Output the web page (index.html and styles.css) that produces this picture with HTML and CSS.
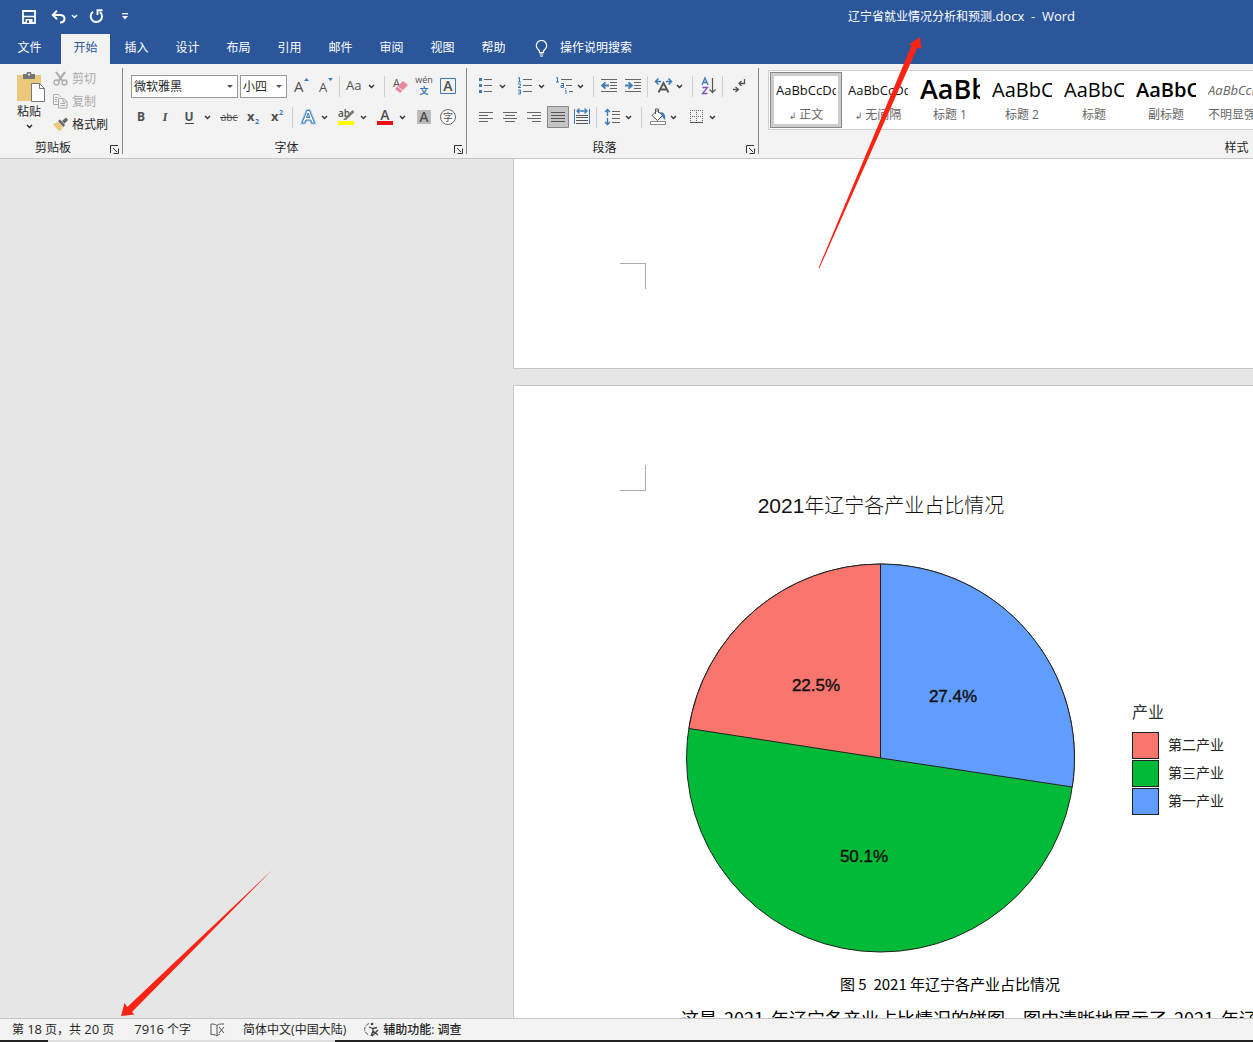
FILE: index.html
```html
<!DOCTYPE html>
<html lang="zh-CN">
<head>
<meta charset="utf-8">
<title>辽宁省就业情况分析和预测.docx - Word</title>
<link rel="stylesheet" href="styles.css">
</head>
<body>
<svg class="defs" aria-hidden="true">
  <symbol id="chev" viewBox="0 0 7 5"><path d="M1 1l2.500 2.500L6 1" fill="none" stroke="currentColor" stroke-width="1.400"/></symbol>
  <symbol id="launch" viewBox="0 0 9 9"><path d="M.5 8V.5H8M3 3l4 4M8.500 3.500v5h-5" fill="none" stroke="#333"/></symbol>
</svg>
<div class="app">
  <header class="titlebar">
    <div class="quick">
      <button aria-label="保存" class="q-save"><svg width="14" height="14" viewBox="0 0 14 14"><path d="M1 1h12v12H1z" fill="none" stroke="#fff" stroke-width="1.800"/><path d="M1 6.500h12" stroke="#fff" stroke-width="1.500"/><path d="M3.500 9h7v4h-7z" fill="#fff"/><path d="M5 10.500h2V13H5z" fill="#2b579a"/></svg></button>
      <button aria-label="撤消" class="q-undo"><svg width="15" height="14" viewBox="0 0 15 14"><path d="M2 5h7c6 0 6 7.500 0 7.500M6 .8L1.800 5 6 9.200" fill="none" stroke="#fff" stroke-width="2"/></svg></button>
      <button aria-label="撤消列表" class="q-chev"><svg width="7" height="5"><use href="#chev"/></svg></button>
      <button aria-label="重复" class="q-redo"><svg width="15" height="15" viewBox="0 0 15 15"><path d="M4 2.700a5.700 5.700 0 1 0 7 .2" fill="none" stroke="#fff" stroke-width="1.900"/><path d="M8.500 6V1.300h5" fill="none" stroke="#fff" stroke-width="1.900"/></svg></button>
      <button aria-label="自定义快速访问工具栏" class="q-more"><svg width="6" height="7" viewBox="0 0 6 7"><path d="M0 .7h6" stroke="#fff" stroke-width="1.300"/><path d="M0 3h6L3 6.500z" fill="#fff"/></svg></button>
    </div>
    <div class="title">辽宁省就业情况分析和预测<span class="lat">.docx&nbsp; -&nbsp; Word</span></div>
  </header>
  <nav class="tabs">
    <button class="file">文件</button><button class="on">开始</button><button>插入</button><button>设计</button><button>布局</button><button>引用</button><button>邮件</button><button>审阅</button><button>视图</button><button>帮助</button>
    <button class="tell"><svg width="13" height="17" viewBox="0 0 13 17"><path d="M4.500 12.500V11C3.500 9.500 1.300 8.500 1.300 5.700a5.200 5.200 0 0 1 10.400 0c0 2.800-2.200 3.800-3.200 5.300v1.500zM4.500 14h4M5 16h3" fill="none" stroke="#fff" stroke-width="1.200"/></svg>操作说明搜索</button>
  </nav>
  <div class="ribbon">
    <section class="group clip">
      <div class="tools">
        <button class="paste"><svg width="30" height="32" viewBox="0 0 30 32"><path d="M1 3h24v26H1z" fill="#eac87c"/><path d="M7 2h3.500a2.500 2.500 0 0 1 5 0H19v5H7z" fill="#777"/><circle cx="13" cy="2.500" r="1" fill="#fff"/><path d="M15.500 11.500h8l5 5V29.500h-13z" fill="#fff" stroke="#777"/><path d="M23.500 11.500v5h5" fill="none" stroke="#777"/></svg><span>粘贴</span><svg width="7" height="5"><use href="#chev"/></svg></button>
        <div class="clipcol">
          <button class="off"><svg width="15" height="15" viewBox="0 0 15 15"><path d="M3 1l6.500 9M12 1L5.500 10" stroke="#aaa" stroke-width="2" fill="none"/><circle cx="3.500" cy="11.500" r="2.500" fill="none" stroke="#aaa" stroke-width="1.300"/><circle cx="11.500" cy="11.500" r="2.500" fill="none" stroke="#aaa" stroke-width="1.300"/></svg>剪切</button>
          <button class="off"><svg width="15" height="15" viewBox="0 0 15 15"><path d="M5 10.500H.5v-10h5L8 3M5.500 4.500h5l3.500 3v6.500H5.500zM10 4.500V8h4M2 3.500h2.500M2 5.500h2M2 7.500h2M7.500 9.500h4.500M7.500 11.500h4.500" fill="none" stroke="#aaa"/></svg>复制</button>
          <button><svg width="15" height="15" viewBox="0 0 15 15"><path d="M0 7l5-2 5 5-3 4.500L3 11z" fill="#eac87c"/><path d="M5 4l2-1.500L12 8l-1.500 2zM9 4l4-3.500L15 3l-3.500 3.500z" fill="#666"/></svg>格式刷</button>
        </div>
      </div>
      <footer><span>剪贴板</span><button aria-label="剪贴板选项"><svg width="9" height="9"><use href="#launch"/></svg></button></footer>
    </section>

    <section class="group font">
      <div class="tools rows">
        <div class="row">
          <label class="combo wide"><select aria-label="字体"><option>微软雅黑</option></select></label>
          <label class="combo"><select aria-label="字号"><option>小四</option></select></label>
          <button class="ib" aria-label="增大字号"><svg viewBox="0 0 24 24"><text x="5" y="18" class="g m" font-size="15">A</text><path d="M15 7l2.500-3L20 7z" fill="#3d7ab8"/></svg></button>
          <button class="ib" aria-label="减小字号"><svg viewBox="0 0 24 24"><text x="6" y="18" class="g m" font-size="13">A</text><path d="M15 4l2.500 3L20 4z" fill="#3d7ab8"/></svg></button>
          <i class="sep"></i>
          <button class="ib split" aria-label="更改大小写"><svg viewBox="0 0 24 24"><text x="3" y="16" class="g m" font-size="13">Aa</text></svg><svg class="c"><use href="#chev"/></svg></button>
          <i class="sep"></i>
          <button class="ib" aria-label="清除格式"><svg viewBox="0 0 24 24"><text x="5" y="13" class="g m" font-size="11">A</text><path d="M7 15L15 7l5 4-8 8z" fill="#e8889a"/><path d="M9.500 12.500l5 4" stroke="#fff"/></svg></button>
          <button class="ib" aria-label="拼音指南"><svg viewBox="0 0 24 24"><text x="12" y="9" class="g" text-anchor="middle" font-size="9">wén</text><text x="12" y="20" class="b" text-anchor="middle" font-size="9" font-weight="700">文</text></svg></button>
          <button class="ib" aria-label="字符边框"><svg viewBox="0 0 24 24"><path d="M4.500 4.500h15v15h-15z" fill="none" stroke="#3d7ab8"/><text x="12" y="17" class="g" text-anchor="middle" font-size="14" font-weight="600">A</text></svg></button>
        </div>
        <div class="row">
          <button class="ib" aria-label="加粗"><svg viewBox="0 0 24 24"><text x="10" y="16" class="g" text-anchor="middle" font-size="12" font-weight="700">B</text></svg></button>
          <button class="ib" aria-label="倾斜"><svg viewBox="0 0 24 24"><text x="10" y="16" class="g serif" text-anchor="middle" font-size="13" font-style="italic" font-weight="700">I</text></svg></button>
          <button class="ib split" aria-label="下划线"><svg viewBox="0 0 24 24"><text x="10" y="16" class="g" text-anchor="middle" font-size="12" font-weight="700">U</text><path d="M6 18.500h9" stroke="#444"/></svg><svg class="c"><use href="#chev"/></svg></button>
          <button class="ib" aria-label="删除线"><svg viewBox="0 0 24 24"><text x="11" y="16" class="g m" text-anchor="middle" font-size="10">abc</text><path d="M2 12.500h18" stroke="#444"/></svg></button>
          <button class="ib" aria-label="下标"><svg viewBox="0 0 24 24"><text x="5" y="16" class="g" font-size="13" font-weight="700">x</text><text x="13" y="19" class="b" font-size="7" font-weight="700">2</text></svg></button>
          <button class="ib" aria-label="上标"><svg viewBox="0 0 24 24"><text x="5" y="16" class="g" font-size="13" font-weight="700">x</text><text x="13" y="10" class="b" font-size="7" font-weight="700">2</text></svg></button>
          <i class="sep"></i>
          <button class="ib split" aria-label="文本效果"><svg viewBox="0 0 24 24"><path d="M6 18L11 5.500h2.500L18.500 18h-2.700l-1-3h-5l-1.200 3zM10.500 12.500h3.500L12.200 8z" fill="#fff" stroke="#a9cdf0" stroke-width="3"/><path d="M6 18L11 5.500h2.500L18.500 18h-2.700l-1-3h-5l-1.200 3zM10.500 12.500h3.500L12.200 8z" fill="#fff" stroke="#3d7ab8"/></svg><svg class="c"><use href="#chev"/></svg></button>
          <button class="ib split" aria-label="突出显示"><svg viewBox="0 0 24 24"><text x="3" y="12" class="g" font-size="10" font-weight="600">ab</text><path d="M9 14L17.500 5l2 2-8.500 8H8z" fill="#777"/><path d="M3 16h16v4H3z" fill="#ff0"/></svg><svg class="c"><use href="#chev"/></svg></button>
          <button class="ib split" aria-label="字体颜色"><svg viewBox="0 0 24 24"><text x="11" y="15" class="g" text-anchor="middle" font-size="14" font-weight="600">A</text><path d="M3 16h16v4H3z" fill="#e81010"/></svg><svg class="c"><use href="#chev"/></svg></button>
          <button class="ib" aria-label="字符底纹"><svg viewBox="0 0 24 24"><path d="M4 5h14v14H4z" fill="#bbb"/><text x="11" y="17" class="g" text-anchor="middle" font-size="14" font-weight="600">A</text></svg></button>
          <button class="ib" aria-label="带圈字符"><svg viewBox="0 0 24 24"><circle cx="11" cy="12" r="7.500" fill="#fff" stroke="#666"/><text x="11" y="16" class="g" text-anchor="middle" font-size="10">字</text></svg></button>
        </div>
      </div>
      <footer><span>字体</span><button aria-label="字体选项"><svg width="9" height="9"><use href="#launch"/></svg></button></footer>
    </section>

    <section class="group para">
      <div class="tools rows">
        <div class="row">
          <button class="ib split" aria-label="项目符号"><svg viewBox="0 0 24 24"><path d="M10 5.500h8M10 11.500h8M10 17.500h8" stroke="#666"/><path d="M5 4h3v3H5zM5 10h3v3H5zM5 16h3v3H5z" fill="#3d7ab8"/></svg><svg class="c"><use href="#chev"/></svg></button>
          <button class="ib split" aria-label="编号"><svg viewBox="0 0 24 24"><path d="M10 5.500h9M10 11.500h9M10 17.500h9" stroke="#666"/><path d="M5 4l1.500-.5V8M5 8h3M5 10h2.500v1.500L5 13.500h3M5 16h2.500v4H5M5.500 18h2" fill="none" stroke="#3d7ab8"/></svg><svg class="c"><use href="#chev"/></svg></button>
          <button class="ib split" aria-label="多级列表"><svg viewBox="0 0 24 24"><path d="M9 5.500h11M14 11.500h6M17 17.500h4" stroke="#666"/><path d="M4 4l1.500-.5V8M4 8h3M9 9.500h2.500v4H9v-2h2.500M13.500 14v1M13 16.500h1V20" fill="none" stroke="#3d7ab8"/></svg><svg class="c"><use href="#chev"/></svg></button>
          <i class="sep"></i>
          <button class="ib" aria-label="减少缩进"><svg viewBox="0 0 24 24"><path d="M4 5.500h16M13 8.500h7M13 11.500h7M13 14.500h7M4 17.500h16" stroke="#666"/><path d="M12 11.500H6M8.500 8.300L5 11.500l3.500 3.200" fill="none" stroke="#3d7ab8" stroke-width="1.800"/></svg></button>
          <button class="ib" aria-label="增加缩进"><svg viewBox="0 0 24 24"><path d="M4 5.500h16M13 8.500h7M13 11.500h7M13 14.500h7M4 17.500h16" stroke="#666"/><path d="M4 11.500h6M7.500 8.300L11 11.500l-3.500 3.200" fill="none" stroke="#3d7ab8" stroke-width="1.800"/></svg></button>
          <i class="sep"></i>
          <button class="ib split" aria-label="中文版式"><svg viewBox="0 0 24 24"><path d="M7.500 18.500L12.500 9l5 9.500M9.500 15.500h6" fill="none" stroke="#555" stroke-width="1.800"/><path d="M5 7.500h5M7.500 4.500l-3 3 3 3M15 7.500h5M17.500 4.500l3 3-3 3" fill="none" stroke="#3d7ab8" stroke-width="1.500"/></svg><svg class="c"><use href="#chev"/></svg></button>
          <i class="sep"></i>
          <button class="ib" aria-label="排序"><svg viewBox="0 0 24 24"><path d="M6 11l3-7 3 7M7 8.500h4" fill="none" stroke="#3d7ab8" stroke-width="1.300"/><path d="M6.500 13.500h5l-5 6h5" fill="none" stroke="#8450b4" stroke-width="1.300"/><path d="M16.500 4v14.500M13.500 15.500l3 3 3-3" fill="none" stroke="#555" stroke-width="1.200"/></svg></button>
          <i class="sep"></i>
          <button class="ib" aria-label="显示编辑标记"><svg viewBox="0 0 24 24"><path d="M18.500 5v4.500H13M15.500 7L13 9.500l2.500 2.500M7 15.500h5M9.500 13l3 2.500-3 2.500" fill="none" stroke="#555" stroke-width="1.300"/></svg></button>
        </div>
        <div class="row">
          <button class="ib" aria-label="左对齐"><svg viewBox="0 0 24 24"><path d="M5 7.500h14M5 10.500h9M5 13.500h14M5 16.500h9" stroke="#666"/></svg></button>
          <button class="ib" aria-label="居中"><svg viewBox="0 0 24 24"><path d="M5 7.500h14M7 10.500h10M5 13.500h14M7 16.500h10" stroke="#666"/></svg></button>
          <button class="ib" aria-label="右对齐"><svg viewBox="0 0 24 24"><path d="M5 7.500h14M10 10.500h9M5 13.500h14M10 16.500h9" stroke="#666"/></svg></button>
          <button class="ib" aria-label="两端对齐"><svg viewBox="0 0 24 24"><path d="M1.500 1.500h21v21h-21z" fill="#c5c5c5" stroke="#888"/><path d="M5 7.500h14M5 10.500h14M5 13.500h14M5 16.500h14" stroke="#555"/></svg></button>
          <button class="ib" aria-label="分散对齐"><svg viewBox="0 0 24 24"><path d="M4.500 4v15M19.500 4v15" stroke="#3d7ab8"/><path d="M7 6h10M9.500 3.500L7 6l2.500 2.500M14.500 3.500L17 6l-2.500 2.500" fill="none" stroke="#3d7ab8" stroke-width="1.300"/><path d="M6 10.500h12M6 12.500h12M6 15.500h12M6 18.500h12" stroke="#555"/></svg></button>
          <i class="sep"></i>
          <button class="ib split" aria-label="行距"><svg viewBox="0 0 24 24"><path d="M12 6.500h8M12 9.500h8M12 13.500h8M12 17.500h8" stroke="#666"/><path d="M7.500 4.500V11M5 7l2.500-2.500L10 7M7.500 13v6.500M5 17l2.500 2.500L10 17" fill="none" stroke="#3d7ab8" stroke-width="1.400"/></svg><svg class="c"><use href="#chev"/></svg></button>
          <i class="sep"></i>
          <button class="ib split" aria-label="底纹"><svg viewBox="0 0 24 24"><path d="M7 10.500l5-5 5.500 5-5 5z" fill="#fff" stroke="#555"/><path d="M10.500 9V4h3v4" fill="none" stroke="#555"/><path d="M15 7c4 0 6 3 5 8-1-1-2-2-3-4z" fill="#3d7ab8"/><path d="M5.500 16.500h15v3h-15z" fill="#fff" stroke="#888"/></svg><svg class="c"><use href="#chev"/></svg></button>
          <button class="ib split" aria-label="边框"><svg viewBox="0 0 24 24"><path d="M6.500 5v12M12.500 5v12M18.500 5v12M6 5.500h13M6 11.500h13" stroke="#666" stroke-dasharray="1 1"/><path d="M6 17.500h13" stroke="#555"/></svg><svg class="c"><use href="#chev"/></svg></button>
        </div>
      </div>
      <footer><span>段落</span><button aria-label="段落选项"><svg width="9" height="9"><use href="#launch"/></svg></button></footer>
    </section>

    <section class="group styles">
      <div class="gallery">
        <button class="sel"><b class="s1">AaBbCcDd</b><span><i>↲</i> 正文</span></button>
        <button><b class="s1">AaBbCcDd</b><span><i>↲</i> 无间隔</span></button>
        <button><b class="s2">AaBb</b><span>标题 1</span></button>
        <button><b class="s3">AaBbC</b><span>标题 2</span></button>
        <button><b class="s3">AaBbC</b><span>标题</span></button>
        <button><b class="s4">AaBbC</b><span>副标题</span></button>
        <button><b class="s5">AaBbCcDd</b><span>不明显强调</span></button>
      </div>
      <footer><span>样式</span></footer>
    </section>
  </div>

  <main class="work">
    <article class="page first"><div class="corner top"></div></article>
    <article class="page second">
      <div class="corner bottom"></div>
      <figure>
        <div class="chart">
          <h2><span>2021</span>年辽宁各产业占比情况</h2>
          <svg class="pie" width="390" height="390" viewBox="0 0 390 390">
            <g stroke="#222" stroke-width="1">
              <circle cx="194.500" cy="195" r="194" fill="#00ba38"/>
              <path d="M194.500 195V1A194 194 0 0 1 386.300 224z" fill="#619cff"/>
              <path d="M194.500 195L2.900 165.500A194 194 0 0 1 194.500 1z" fill="#f8766d"/>
            </g>
            <g class="pct"><text x="130" y="128">22.5%</text><text x="267" y="139">27.4%</text><text x="178" y="299">50.1%</text></g>
          </svg>
          <div class="legend">
            <h3>产业</h3>
            <ul><li class="k2">第二产业</li><li class="k3">第三产业</li><li class="k1">第一产业</li></ul>
          </div>
        </div>
        <figcaption>图 5&nbsp; 2021 年辽宁各产业占比情况</figcaption>
      </figure>
      <p>这是<span>2021</span>年辽宁各产业占比情况的饼图，图中清晰地展示了<span>2021</span>年辽宁</p>
    </article>
  </main>

  <footer class="status">
    <span class="st-page">第 <span class="lat">18</span> 页，共 <span class="lat">20</span> 页</span>
    <span class="st-words"><span class="lat">7916</span> 个字</span>
    <svg class="st-book" width="15" height="14" viewBox="0 0 15 14"><path d="M7 2.500C5 1 3 1 1 1v10.500c2 0 4 0 6 1.500zM7 2.500C8.500 1 10 1 14 1M7 13c1-1 2-1.500 3-1.500M9 4l5 6M14 4l-5 6" fill="none" stroke="#555"/></svg>
    <span class="st-lang">简体中文(中国大陆)</span>
    <button class="st-acc"><svg width="16" height="15" viewBox="0 0 16 15"><path d="M5 1.500a6 6 0 0 0 0 11.500" fill="none" stroke="#555" stroke-dasharray="4 1"/><circle cx="8" cy="2" r="1.300" fill="#444"/><path d="M5 5l4 1.500 4-1M9 6.500V9l-2 5M9 9l5 4M8 14l6-6" fill="none" stroke="#444" stroke-width="1.300"/></svg>辅助功能: 调查</button>
  </footer>
  <div class="edge"></div>
  <svg class="arrow a1" width="104" height="232" viewBox="0 0 104 232"><path d="M102 0l1.500 12-4-1.500L1.500 231H.5L93.500 8.500 91.500 7z" fill="#fa2314"/></svg>
  <svg class="arrow a2" width="152" height="148" viewBox="0 0 152 148"><path d="M0 147l3.500-13 2.800 4L151 1 11 143l2.500 2.500z" fill="#fa2314"/></svg>
</div>
</body>
</html>
```
FILE: styles.css
```css
* { box-sizing: border-box; }
body {
  margin: 0;
  font: 12px/16px "Open Sans", "Noto Sans CJK SC", sans-serif;
  color: #262626;
}
button, select { font: inherit; color: inherit; background: none; border: 0; padding: 0; }
button { display: flex; align-items: center; justify-content: center; }
svg { display: block; flex: none; }
.lat { font-size: 13px; }
.defs { position: absolute; width: 0; height: 0; }
.app { position: relative; display: flex; flex-direction: column; height: 100vh; overflow: hidden; }

.titlebar {
  display: flex; flex: none; justify-content: space-between; align-items: center;
  height: 33px; padding: 0 178px 0 22px; background: #2b579a; color: #fff;
}
.quick { display: flex; align-items: center; }
.q-save { margin-right: 15px; }
.q-undo { margin-right: 5px; }
.q-chev { margin-right: 11px; }
.q-redo { margin-right: 18px; }

.tabs { display: flex; flex: none; gap: 2px; height: 31px; padding-top: 1px; background: #2b579a; color: #fff; }
.tabs button { width: 49px; padding-bottom: 2px; }
.tabs .file { width: 59px; }
.tabs .on { background: #f3f3f3; color: #2b579a; }
.tabs .tell { width: auto; gap: 12px; margin-left: 15px; }

.ribbon {
  display: flex; flex: none; height: 95px; padding: 4px 0; overflow: hidden;
  background: #f3f3f3; border-bottom: 1px solid #c8c8c8;
}
.group { display: flex; flex: none; flex-direction: column; justify-content: space-between; border-right: 1px solid #888; }
.group footer { display: flex; height: 16px; line-height: 20px; }
.group footer span { flex: 1; text-align: center; }
.group footer button { width: 16px; padding-top: 6px; }
.clip { width: 123px; }
.font { width: 344px; }
.para { width: 292px; }
.styles { width: 956px; }
.clip .tools { display: flex; align-items: flex-start; padding-left: 14px; }
.paste { flex-direction: column; width: 30px; padding-top: 4px; }
.paste > svg:first-child { margin-left: 4px; }
.paste span { line-height: 16px; margin-bottom: 4px; }
.clipcol { padding-left: 9px; }
.clipcol button { height: 23px; gap: 4px; padding-bottom: 2px; }
.clipcol .off { color: #aaa; }

.rows { padding-top: 6px; }
.font .rows { padding-left: 8px; }
.para .rows { padding-left: 7px; }
.row { display: flex; align-items: center; height: 24px; margin-bottom: 7px; }
.combo { display: flex; align-items: center; width: 47px; height: 23px; margin-right: 2px; border: 1px solid #999; background: #fff; }
.combo.wide { width: 107px; }
.combo select { flex: 1; min-width: 0; height: 21px; padding: 2px 0 0 2px; appearance: none; outline: 0; }
.combo::after { content: ""; margin-right: 4px; border: 3px solid transparent; border-top-color: #555; border-bottom: 0; }
.ib { width: 24px; height: 24px; color: #333; }
.ib svg { width: 24px; height: 24px; }
.ib.split { width: 35px; margin-right: 4px; }
.ib .c { width: 7px; height: 5px; margin: 0 3px 0 1px; }
.sep { width: 1px; height: 21px; margin: 0 3px 0 2px; background: #d0d0d0; }
.g { fill: #505050; }
.m { font-weight: 500; }
.b { fill: #3d7ab8; }
.serif { font-family: "Liberation Serif", serif; }

.gallery { display: flex; height: 60px; margin: 2px 0 0 9px; padding: 1px; background: #fff; border: 1px solid #d0d0d0; }
.gallery button { flex-direction: column; width: 72px; padding: 0 6px 2px; overflow: hidden; color: #666; }
.gallery .sel { padding: 0 3px 2px; border: 1px solid #888; box-shadow: inset 0 0 0 3px #ccc; }
.gallery b { align-self: stretch; overflow: hidden; height: 32px; line-height: 32px; font-weight: 400; color: #111; text-align: left; white-space: nowrap; }
.gallery .sel b { margin: 0 2px; }
.gallery span { height: 18px; line-height: 18px; white-space: nowrap; }
.gallery i { font: 9px "DejaVu Sans", sans-serif; }
.gallery .s1 { font-size: 13px; }
.gallery .s2 { font-size: 27px; line-height: 30px; font-weight: 600; color: #000; }
.gallery .s3 { font-size: 20px; color: #000; }
.gallery .s4 { font-size: 20px; font-weight: 600; color: #000; }
.gallery .s5 { font-size: 13px; font-style: italic; color: #666; }

.work { flex: 1; min-height: 0; overflow: hidden; padding-left: 513px; background: #e6e6e6; }
.page { width: 874px; padding: 0 132px 0 106px; background: #fff; border: 1px solid #c6c6c6; }
.first { height: 210px; padding-top: 104px; border-top: 0; }
.second { height: 1235px; margin-top: 16px; padding-top: 79px; }
.corner { width: 26px; height: 26px; border-right: 1px solid #aaa; }
.corner.top { border-top: 1px solid #aaa; }
.corner.bottom { border-bottom: 1px solid #aaa; }

figure { margin: 0; padding-left: 66px; }
.chart { display: grid; grid-template-columns: 390px 1fr; column-gap: 56px; align-items: center; font-family: "Liberation Sans", "Noto Sans CJK SC", sans-serif; }
.chart h2 { grid-column: 1; margin: 0 0 42px; font-size: 20px; line-height: 30px; font-weight: 300; text-align: center; color: #111; white-space: nowrap; }
.chart h2 span { font-size: 21px; }
.chart .pie { grid-row: 2; }
.pct text { font-size: 17px; fill: #111; stroke: #111; stroke-width: .4; text-anchor: middle; }
.legend { grid-row: 2; }
.legend h3 { margin: 0 0 6px; font-size: 16px; line-height: 24px; font-weight: 400; color: #333; }
.legend ul { margin: 0; padding: 0; list-style: none; }
.legend li { display: flex; align-items: center; gap: 9px; height: 28px; font-size: 14px; color: #222; }
.legend li::before { content: ""; box-sizing: border-box; width: 27px; height: 27px; border: 1px solid #222; }
.legend .k1::before { background: #619cff; }
.legend .k2::before { background: #f8766d; }
.legend .k3::before { background: #00ba38; }
figcaption { margin: 19px 0 0 154px; font: 15px/24px "Noto Sans CJK SC", sans-serif; color: #000; white-space: nowrap; }
.second p { margin: 8px 0 0 61px; font: 18px/28px "Noto Sans CJK SC", sans-serif; color: #000; white-space: nowrap; }
.second p span { margin: 0 7px; }

.status { display: flex; flex: none; align-items: center; height: 22px; padding-left: 12px; background: #f3f3f3; border-top: 1px solid #c6c6c6; white-space: nowrap; }
.st-page { margin-right: 20px; }
.st-words { margin-right: 19px; }
.st-book { margin-right: 18px; }
.st-lang { margin-right: 18px; }
.st-acc { gap: 3px; font-weight: 500; }
.edge { flex: none; height: 2px; background: linear-gradient(90deg, #222 48px, #ddd 48px 335px, #222 335px); }

.arrow { position: absolute; pointer-events: none; }
.a1 { left: 818px; top: 37px; }
.a2 { left: 121px; bottom: 25px; }
```
